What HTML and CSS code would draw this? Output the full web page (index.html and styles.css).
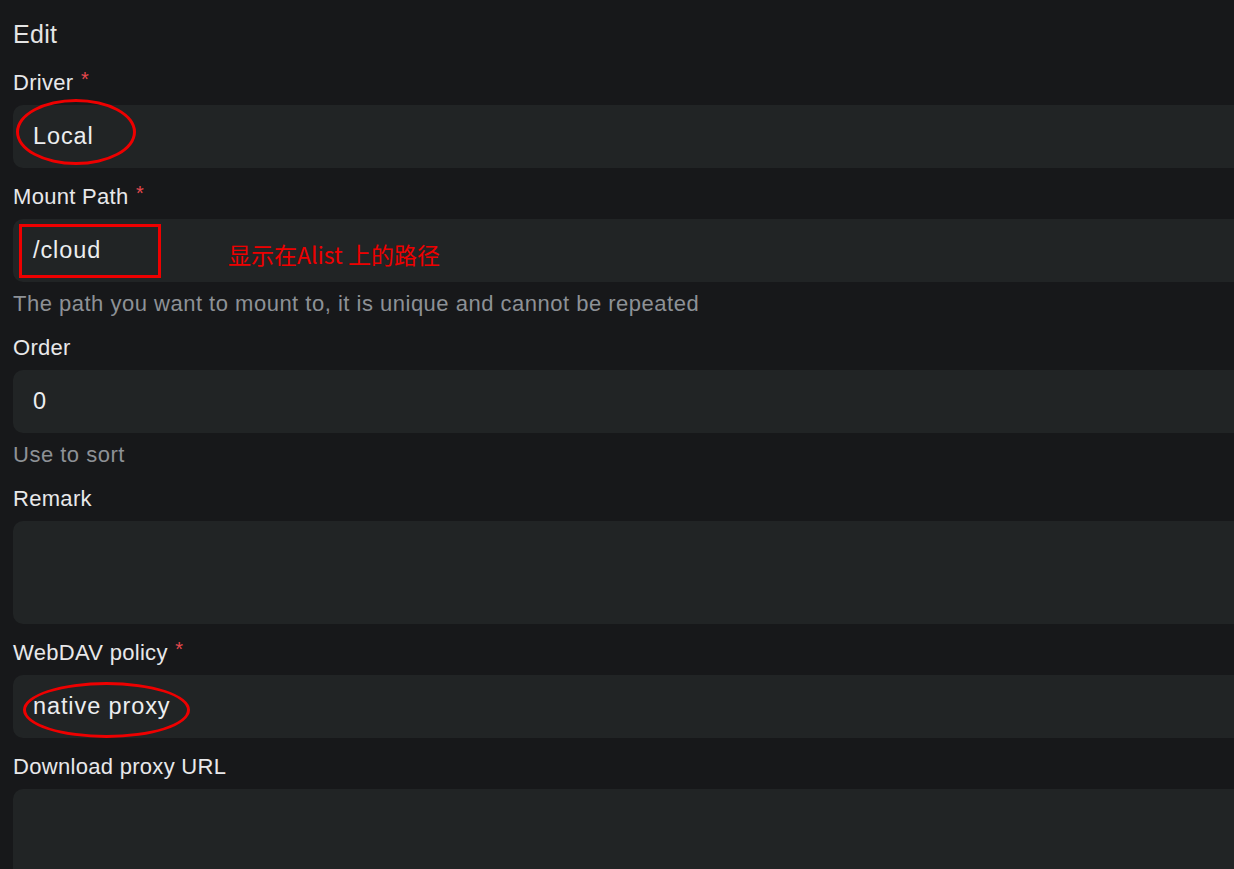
FILE: index.html
```html
<!DOCTYPE html>
<html lang="en">
<head>
<meta charset="utf-8">
<title>Edit</title>
<link rel="stylesheet" href="styles.css">
</head>
<body>
<div class="page">
  <h1 class="title">Edit</h1>
  <div class="field">
    <label class="label">Driver <span class="req">*</span></label>
    <div class="input">Local</div>
  </div>
  <div class="field">
    <label class="label">Mount Path <span class="req">*</span></label>
    <div class="input">/cloud</div>
    <div class="help">The path you want to mount to, it is unique and cannot be repeated</div>
  </div>
  <div class="field">
    <label class="label">Order</label>
    <div class="input">0</div>
    <div class="help">Use to sort</div>
  </div>
  <div class="field">
    <label class="label">Remark</label>
    <div class="textarea"></div>
  </div>
  <div class="field">
    <label class="label">WebDAV policy <span class="req">*</span></label>
    <div class="input">native proxy</div>
  </div>
  <div class="field">
    <label class="label">Download proxy URL</label>
    <div class="textarea"></div>
  </div>

  <div class="mark ellipse ellipse-driver"></div>
  <div class="mark box-path"></div>
  <div class="note">显示在Alist 上的路径</div>
  <div class="mark ellipse ellipse-webdav"></div>
</div>
</body>
</html>
```

FILE: styles.css
```css
html, body {
  margin: 0;
  padding: 0;
  background: #17181a;
  overflow: hidden;
}
body {
  font-family: "Liberation Sans", Arial, sans-serif;
  color: #e8e8ea;
}
.page {
  position: relative;
  width: 1500px;
  padding: 16px 0 0 13px;
  display: flex;
  flex-direction: column;
  gap: 14px;
}
.title {
  margin: 0 0 2px;
  font-size: 25px;
  line-height: 36px;
  font-weight: normal;
  letter-spacing: 0.3px;
  color: #e4e4e4;
}
.field {
  display: flex;
  flex-direction: column;
  gap: 7px;
}
.label {
  display: block;
  height: 30px;
  font-size: 22px;
  line-height: 30px;
  letter-spacing: 0.3px;
  color: #e8e8ea;
}
.req {
  position: relative;
  top: -4px;
  line-height: 1;
  color: #e5484d;
  font-size: 20px;
  margin-left: 1px;
}
.input {
  height: 63px;
  box-sizing: border-box;
  background: #212425;
  border-radius: 10px;
  padding: 0 20px;
  display: flex;
  align-items: center;
  font-size: 23.5px;
  letter-spacing: 0.9px;
  color: #eceef0;
}
.textarea {
  height: 103px;
  background: #212425;
  border-radius: 10px;
}
.help {
  font-size: 22px;
  line-height: 30px;
  letter-spacing: 0.5px;
  color: #8d9196;
}
.mark {
  position: absolute;
  box-sizing: border-box;
  border: 3px solid #ee0000;
}
.ellipse {
  border-radius: 50%;
}
.ellipse-driver {
  left: 16px;
  top: 99px;
  width: 120px;
  height: 66px;
}
.box-path {
  left: 19px;
  top: 224px;
  width: 142px;
  height: 54px;
}
.ellipse-webdav {
  left: 23px;
  top: 682px;
  width: 167px;
  height: 56px;
}
.note {
  position: absolute;
  left: 228px;
  top: 237px;
  font-family: "Noto Sans CJK SC", sans-serif;
  font-size: 23px;
  line-height: 34px;
  color: #ee0000;
}
```
